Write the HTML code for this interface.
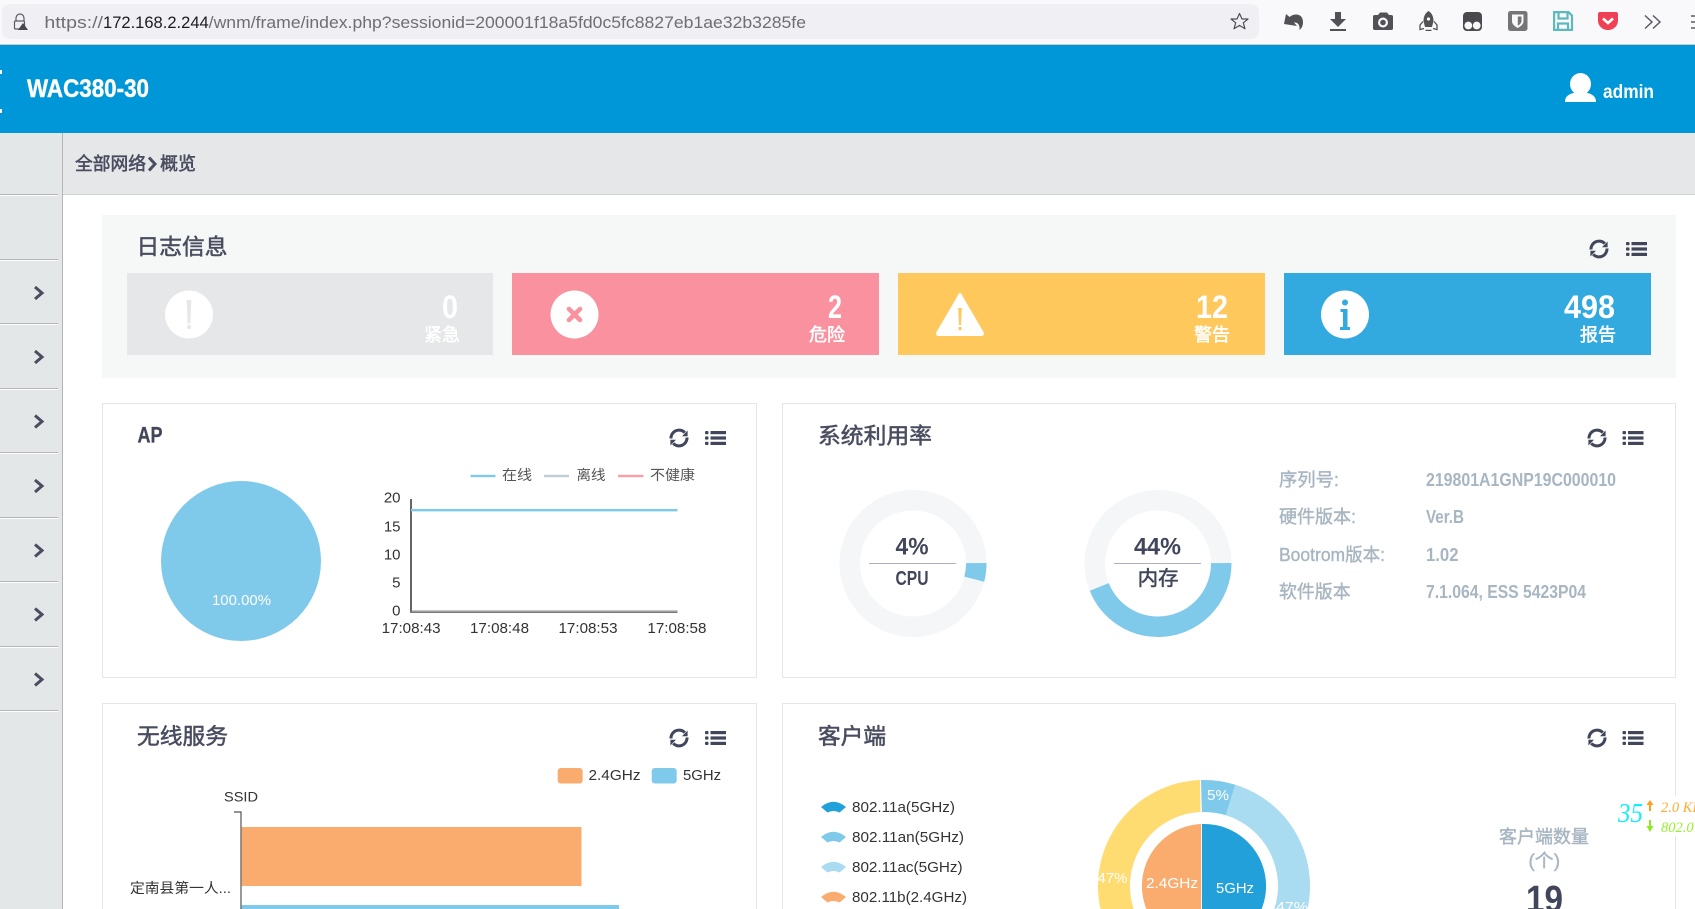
<!DOCTYPE html>
<html lang="zh"><head><meta charset="utf-8"><title>WAC380-30</title>
<style>
html,body{margin:0;padding:0;background:#fff;width:1695px;height:909px;overflow:hidden}
svg{display:block}
text{font-family:"Liberation Sans","Noto Sans CJK SC",sans-serif}
.t{font-size:22px;fill:#4a4d60;stroke:#4a4d60;stroke-width:.55}
.n{font-size:32px;font-weight:bold;fill:#fff}
.l{font-size:18px;fill:#fff;stroke:#fff;stroke-width:.5}
.i{font-size:18px;fill:#a8b6c2;stroke:#a8b6c2;stroke-width:.4}
.v{font-size:18px;font-weight:bold;fill:#a8b6c2}
.c{font-size:15px;fill:#333}
.w{font-size:14.5px;fill:#fff}
.d{font-weight:bold;fill:#41465a}
</style></head><body>
<svg width="1695" height="909" viewBox="0 0 1695 909" xmlns="http://www.w3.org/2000/svg">
<defs>
<g id="ref" fill="none" stroke="#41465a">
<path d="M-8,0.5A8,8 0 0 1 5.8,-5.4" stroke-width="3"/>
<path d="M8,-0.5A8,8 0 0 1 -5.8,5.4" stroke-width="3"/>
<path d="M8.6,-7.5V-1.8H3Z M-8.6,7.5V1.8H-3Z" fill="#41465a" stroke="none"/>
</g>
<g id="men" fill="#41465a">
<rect x="0" y="0" width="3.5" height="3.2" rx="1"/><rect x="5.5" y="0" width="15.5" height="3.2"/>
<rect x="0" y="5.4" width="3.5" height="3.2" rx="1"/><rect x="5.5" y="5.4" width="15.5" height="3.2"/>
<rect x="0" y="10.8" width="3.5" height="3.2" rx="1"/><rect x="5.5" y="10.8" width="15.5" height="3.2"/>
</g>
<path id="leg" d="M-12.5,0Q0,-10.5 12.5,0L6,5.5Q0,2.5 -6,5.5Z"/>
<path id="chev" d="M-4,-6L3,0L-4,6" fill="none" stroke="#4a4d60" stroke-width="3"/>
</defs>

<!-- browser bar -->
<rect width="1695" height="44" fill="#f9f9fb"/>
<rect y="44" width="1695" height="1" fill="#ccc"/>
<rect x="2" y="4" width="1257" height="35" rx="8" fill="#f0f0f4"/>
<g fill="none" stroke="#5b5b66" stroke-width="1.2"><path d="M16,21V18A4,4 0 0 1 24,18V21"/><rect x="14.5" y="21" width="10" height="8" rx="1"/></g>
<path d="M23,23L28,30H18Z" fill="#45454d"/>
<text x="44.4" y="28" font-size="17" fill="#6e6e73" textLength="58.6" lengthAdjust="spacingAndGlyphs">https://</text>
<text x="103" y="28" font-size="17" fill="#1c1c20" textLength="105.7" lengthAdjust="spacingAndGlyphs">172.168.2.244</text>
<text x="208.7" y="28" font-size="17" fill="#6e6e73" textLength="597.3" lengthAdjust="spacingAndGlyphs">/wnm/frame/index.php?sessionid=200001f18a5fd0c5fc8827eb1ae32b3285fe</text>
<path d="M1239.5,13.5L1242,19H1248L1243.3,22.8L1245,28.8L1239.5,25.4L1234,28.8L1235.7,22.8L1231,19H1237Z" fill="none" stroke="#4e4e56" stroke-width="1.2" stroke-linejoin="round"/>
<!-- undo -->
<path d="M1284,24L1286,14L1289.5,17C1295,12.5 1303,14 1303,22C1303,25.5 1302,28 1299.5,30C1300,26 1298.5,22 1294,22.5L1297,26Z" fill="#525256"/>
<!-- download -->
<path d="M1335,12H1341V19H1346L1338,27L1330,19H1335Z" fill="#525256"/><rect x="1330" y="29" width="16" height="2" fill="#525256"/>
<!-- camera -->
<path d="M1373,16.5Q1373,15 1375,15H1378L1380,12.5H1387L1389,15H1391Q1393,15 1393,16.5V28.5Q1393,30 1391,30H1375Q1373,30 1373,28.5Z" fill="#525256"/><circle cx="1383" cy="22.5" r="5" fill="#f9f9fb"/><circle cx="1383" cy="22.5" r="2.8" fill="#525256"/>
<!-- rocket -->
<path d="M1428.5,11C1432,13 1433.5,17 1433.5,21L1432,27H1425L1423.5,21C1423.5,17 1425,13 1428.5,11Z" fill="#525256"/>
<circle cx="1428.5" cy="19" r="1.6" fill="#f9f9fb"/>
<path d="M1423,21.5L1420,25V29.5L1424,28.5M1434,21.5L1437,25V29.5L1433,28.5M1425.5,30.4H1431.5" fill="none" stroke="#525256" stroke-width="1.3"/>
<!-- tampermonkey -->
<rect x="1463" y="12" width="19" height="19" rx="4" fill="#4a4a4e"/><circle cx="1468.3" cy="25.5" r="3.9" fill="#f9f9fb"/><circle cx="1476.7" cy="25.5" r="3.9" fill="#f9f9fb"/>
<!-- bitwarden -->
<rect x="1508" y="11" width="19.5" height="20" rx="2.5" fill="#757575"/>
<path d="M1512,14.5H1523.5V21C1523.5,24.5 1520.5,26.5 1517.7,28C1515,26.5 1512,24.5 1512,21Z" fill="#f9f9fb"/>
<path d="M1517.8,16.5H1521.5V21C1521.5,23 1519.8,24.6 1517.8,25.7Z" fill="#757575"/>
<!-- save -->
<g fill="none" stroke="#5eb8bd" stroke-width="2.2"><path d="M1554.1,12.1H1568.5L1572,15.6V29.9H1554.1Z"/><path d="M1558.5,12.5V18.5H1567.5V12.5M1558,30V23.5H1568V30"/></g>
<!-- pocket -->
<path d="M1598,14Q1598,12 1600,12H1616Q1618,12 1618,14V20.5C1618,26 1613.5,30 1608,30C1602.5,30 1598,26 1598,20.5Z" fill="#ef4056"/>
<path d="M1603,18.5L1608,23L1613,18.5" fill="none" stroke="#fff" stroke-width="2.6"/>
<!-- chevrons / menu -->
<path d="M1645,15.5L1652,22L1645,28.5M1653,15.5L1660,22L1653,28.5" fill="none" stroke="#5b5b66" stroke-width="1.5"/>
<path d="M1691,16H1695M1691,22H1695M1691,28H1695" stroke="#5b5b66" stroke-width="1.5"/>

<!-- header -->
<rect y="45" width="1695" height="88" fill="#0097d8"/>
<rect x="0" y="70" width="2" height="4" fill="#fff"/><rect x="0" y="109" width="2" height="4" fill="#fff"/>
<text x="27" y="97" font-size="25" font-weight="bold" fill="#fff" stroke="#fff" stroke-width=".4" textLength="122" lengthAdjust="spacingAndGlyphs">WAC380-30</text>
<ellipse cx="1580.5" cy="84" rx="10.5" ry="11" fill="#fff"/>
<path d="M1565,102C1565,96 1569,94 1575,92.5Q1580.5,96 1586,92.5C1592,94 1596,96 1596,102Z" fill="#fff"/>
<text x="1603" y="98" font-size="19" font-weight="bold" fill="#fff" textLength="51" lengthAdjust="spacingAndGlyphs">admin</text>

<!-- sidebar -->
<rect y="133" width="62" height="776" fill="#e4e7e8"/>
<rect x="62" y="133" width="1" height="776" fill="#b5b5b5"/>
<g fill="#b5b5b5">
<rect y="194" width="58" height="1"/><rect y="259" width="58" height="1"/><rect y="323" width="58" height="1"/><rect y="388" width="58" height="1"/><rect y="452" width="58" height="1"/><rect y="517" width="58" height="1"/><rect y="581" width="58" height="1"/><rect y="646" width="58" height="1"/><rect y="710" width="58" height="1"/>
</g>
<g fill="#fff">
<rect y="195" width="58" height="1"/><rect y="260" width="58" height="1"/><rect y="324" width="58" height="1"/><rect y="389" width="58" height="1"/><rect y="453" width="58" height="1"/><rect y="518" width="58" height="1"/><rect y="582" width="58" height="1"/><rect y="647" width="58" height="1"/><rect y="711" width="58" height="1"/>
</g>
<use href="#chev" x="39" y="293"/><use href="#chev" x="39" y="357"/><use href="#chev" x="39" y="421.5"/><use href="#chev" x="39" y="486"/><use href="#chev" x="39" y="550.5"/><use href="#chev" x="39" y="614.5"/><use href="#chev" x="39" y="679.5"/>

<!-- breadcrumb -->
<rect x="63" y="133" width="1632" height="61" fill="#e6e7e9"/>
<rect x="63" y="194" width="1632" height="1" fill="#cfd0d2"/>
<text x="75" y="170" font-size="18" fill="#4a4d60" stroke="#4a4d60" stroke-width=".55" textLength="71" lengthAdjust="spacingAndGlyphs">全部网络</text>
<path d="M149,157.5L155,164L149,170.5" fill="none" stroke="#4a4d60" stroke-width="3"/>
<text x="160" y="170" font-size="18" fill="#4a4d60" stroke="#4a4d60" stroke-width=".55" textLength="36" lengthAdjust="spacingAndGlyphs">概览</text>

<!-- log panel -->
<rect x="102" y="215" width="1574" height="163" fill="#f6f8f7"/>
<text class="t" x="136.5" y="254.5" textLength="91" lengthAdjust="spacingAndGlyphs">日志信息</text>
<use href="#ref" x="1599" y="249"/><use href="#men" x="1626" y="242"/>
<rect x="127" y="273" width="366" height="82" fill="#e6e7e9"/>
<rect x="512" y="273" width="367" height="82" fill="#fa919f"/>
<rect x="898" y="273" width="367" height="82" fill="#ffc85c"/>
<rect x="1284" y="273" width="367" height="82" fill="#33aadf"/>
<circle cx="189" cy="314.5" r="24" fill="#fff"/>
<path d="M186.6,300H191.4L190.3,323.5H187.7Z" fill="#e6e7e9"/><rect x="187" y="325" width="4" height="4" rx="1.6" fill="#e6e7e9"/>
<circle cx="574.5" cy="314.5" r="24" fill="#fff"/>
<path d="M569,309L580,320M580,309L569,320" stroke="#fa919f" stroke-width="4.6" fill="none" stroke-linecap="round"/>
<path d="M960,293Q961.5,293 962.5,296L983.5,332Q985,336 981,336H939Q935,336 936.5,332L957.5,296Q958.5,293 960,293Z" fill="#fff"/>
<path d="M958.2,308H961.8L961,325H959Z" fill="#ffc85c"/><rect x="958.5" y="327" width="3" height="3.2" fill="#ffc85c"/>
<circle cx="1345" cy="314.5" r="24" fill="#fff"/>
<circle cx="1345" cy="302.5" r="3" fill="#33aadf"/>
<path d="M1340.5,309H1347.5V327H1350V330H1340V327H1343V312H1340.5Z" fill="#33aadf"/>
<text class="n" x="442" y="318" textLength="16" lengthAdjust="spacingAndGlyphs">0</text>
<text class="n" x="828" y="318" textLength="14" lengthAdjust="spacingAndGlyphs">2</text>
<text class="n" x="1196" y="318" textLength="32" lengthAdjust="spacingAndGlyphs">12</text>
<text class="n" x="1564" y="318" textLength="51" lengthAdjust="spacingAndGlyphs">498</text>
<text class="l" x="424" y="341" textLength="36" lengthAdjust="spacingAndGlyphs">紧急</text>
<text class="l" x="809" y="341" textLength="36" lengthAdjust="spacingAndGlyphs">危险</text>
<text class="l" x="1194" y="341" textLength="36" lengthAdjust="spacingAndGlyphs">警告</text>
<text class="l" x="1580" y="341" textLength="36" lengthAdjust="spacingAndGlyphs">报告</text>

<!-- AP panel -->
<rect x="102.5" y="403.5" width="654" height="274" fill="#fff" stroke="#e6e6e6"/>
<text x="137.5" y="442.5" font-size="22" font-weight="bold" fill="#41465a" stroke="#41465a" stroke-width=".3" textLength="25" lengthAdjust="spacingAndGlyphs">AP</text>
<use href="#ref" x="679" y="438"/><use href="#men" x="705" y="431"/>
<circle cx="241" cy="561" r="80" fill="#7fcaeb"/>
<text class="w" x="212" y="605" textLength="59" lengthAdjust="spacingAndGlyphs">100.00%</text>
<rect x="470.5" y="474.8" width="25" height="2.4" fill="#7fcaeb"/>
<text x="502" y="480" font-size="14" fill="#555" textLength="30" lengthAdjust="spacingAndGlyphs">在线</text>
<rect x="544" y="474.8" width="25" height="2.4" fill="#c0cdd7"/>
<text x="576.5" y="480" font-size="14" fill="#555" textLength="29" lengthAdjust="spacingAndGlyphs">离线</text>
<rect x="618" y="474.8" width="25.5" height="2.4" fill="#fa9fa9"/>
<text x="650" y="480" font-size="14" fill="#555" textLength="45" lengthAdjust="spacingAndGlyphs">不健康</text>
<g text-anchor="end" font-size="15" fill="#333">
<text x="400.5" y="502.5">20</text><text x="400.5" y="531.5">15</text><text x="400.5" y="559.5">10</text><text x="400.5" y="587.5">5</text><text x="400.5" y="615.5">0</text>
</g>
<rect x="410" y="499" width="2" height="114" fill="#666"/>
<rect x="410" y="610.5" width="267.5" height="2.5" fill="#777"/>
<rect x="412" y="610" width="265.5" height="1.5" fill="#c8c4c8"/>
<rect x="411" y="509" width="266.5" height="2.4" fill="#7fcaeb"/>
<text class="c" x="381.6" y="633" textLength="59" lengthAdjust="spacingAndGlyphs">17:08:43</text>
<text class="c" x="470" y="633" textLength="59" lengthAdjust="spacingAndGlyphs">17:08:48</text>
<text class="c" x="558.5" y="633" textLength="59" lengthAdjust="spacingAndGlyphs">17:08:53</text>
<text class="c" x="647.4" y="633" textLength="59" lengthAdjust="spacingAndGlyphs">17:08:58</text>

<!-- system panel -->
<rect x="782.5" y="403.5" width="893" height="274" fill="#fff" stroke="#e6e6e6"/>
<text class="t" x="818" y="443.5" textLength="114" lengthAdjust="spacingAndGlyphs">系统利用率</text>
<use href="#ref" x="1597" y="438"/><use href="#men" x="1622.5" y="431"/>
<circle cx="913" cy="563.5" r="63.25" fill="none" stroke="#f4f6f8" stroke-width="20.5"/>
<circle cx="913" cy="563.5" r="63.25" fill="none" stroke="#7fcaeb" stroke-width="20.5" pathLength="100" stroke-dasharray="4 96"/>
<circle cx="1158" cy="563.5" r="63.25" fill="none" stroke="#f4f6f8" stroke-width="20.5"/>
<circle cx="1158" cy="563.5" r="63.25" fill="none" stroke="#7fcaeb" stroke-width="20.5" pathLength="100" stroke-dasharray="44 56"/>
<text class="d" x="895.5" y="554.3" font-size="24" textLength="33" lengthAdjust="spacingAndGlyphs">4%</text>
<rect x="869" y="563" width="87" height="1" fill="#b0afc0"/>
<text class="d" x="895.5" y="585" font-size="20" textLength="33" lengthAdjust="spacingAndGlyphs">CPU</text>
<text class="d" x="1134" y="554.3" font-size="24" textLength="47" lengthAdjust="spacingAndGlyphs">44%</text>
<rect x="1114" y="563" width="87" height="1" fill="#b0afc0"/>
<text x="1137.6" y="585" font-size="20" fill="#41465a" stroke="#41465a" stroke-width=".5" textLength="41" lengthAdjust="spacingAndGlyphs">内存</text>
<text class="i" x="1279" y="486" textLength="60" lengthAdjust="spacingAndGlyphs">序列号:</text>
<text class="i" x="1279" y="523" textLength="77" lengthAdjust="spacingAndGlyphs">硬件版本:</text>
<text class="i" x="1279" y="561" textLength="106" lengthAdjust="spacingAndGlyphs">Bootrom版本:</text>
<text class="i" x="1279" y="598" textLength="71.6" lengthAdjust="spacingAndGlyphs">软件版本</text>
<text class="v" x="1426" y="486" textLength="190" lengthAdjust="spacingAndGlyphs">219801A1GNP19C000010</text>
<text class="v" x="1426" y="523" textLength="38" lengthAdjust="spacingAndGlyphs">Ver.B</text>
<text class="v" x="1426" y="561" textLength="32.5" lengthAdjust="spacingAndGlyphs">1.02</text>
<text class="v" x="1426" y="598" textLength="160" lengthAdjust="spacingAndGlyphs">7.1.064, ESS 5423P04</text>

<!-- wireless panel -->
<path d="M102.5,909V703.5H756.5V909" fill="#fff" stroke="#e6e6e6"/>
<text class="t" x="137" y="744" textLength="91" lengthAdjust="spacingAndGlyphs">无线服务</text>
<use href="#ref" x="679" y="738"/><use href="#men" x="705" y="731"/>
<rect x="557.7" y="768" width="25" height="15.5" rx="3" fill="#faac6e"/>
<text class="c" x="588.5" y="780" textLength="52" lengthAdjust="spacingAndGlyphs">2.4GHz</text>
<rect x="651.7" y="768" width="25" height="15.5" rx="3" fill="#7fcaeb"/>
<text class="c" x="683" y="780" textLength="38" lengthAdjust="spacingAndGlyphs">5GHz</text>
<text x="224" y="801.5" font-size="14" fill="#333" textLength="34" lengthAdjust="spacingAndGlyphs">SSID</text>
<path d="M234,812H241V909" fill="none" stroke="#555" stroke-width="1.2"/>
<rect x="241.5" y="827" width="340" height="59" fill="#faac6e"/>
<rect x="241.5" y="905" width="377.5" height="4" fill="#7fcaeb"/>
<text x="130" y="893" font-size="14" fill="#333" textLength="101" lengthAdjust="spacingAndGlyphs">定南县第一人...</text>

<!-- client panel -->
<path d="M782.5,909V703.5H1675.5V909" fill="#fff" stroke="#e6e6e6"/>
<text class="t" x="818" y="744" textLength="68" lengthAdjust="spacingAndGlyphs">客户端</text>
<use href="#ref" x="1597" y="738"/><use href="#men" x="1622.5" y="731"/>
<use href="#leg" x="833.5" y="807" fill="#22a0d9"/>
<use href="#leg" x="833.5" y="837" fill="#7fcaeb"/>
<use href="#leg" x="833.5" y="867" fill="#a9dbf1"/>
<use href="#leg" x="833.5" y="897" fill="#faac6e"/>
<text class="c" x="852" y="812" textLength="103" lengthAdjust="spacingAndGlyphs">802.11a(5GHz)</text>
<text class="c" x="852" y="842" textLength="112" lengthAdjust="spacingAndGlyphs">802.11an(5GHz)</text>
<text class="c" x="852" y="872" textLength="110.6" lengthAdjust="spacingAndGlyphs">802.11ac(5GHz)</text>
<text class="c" x="852" y="902" textLength="115" lengthAdjust="spacingAndGlyphs">802.11b(2.4GHz)</text>
<path d="M1201,780A106,106 0 0 1 1235.3,784.7L1225.9,815.3A74,74 0 0 0 1201.9,812Z" fill="#7fcaeb"/>
<path d="M1235.3,784.7A106,106 0 0 1 1307.5,909H1274.3A74,74 0 0 0 1225.9,815.3Z" fill="#a9dbf1"/>
<path d="M1100.5,909A106,106 0 0 1 1200,780L1200.5,812A74,74 0 0 0 1133.7,909Z" fill="#ffdc72"/>
<path d="M1202,824A62,62 0 0 1 1261.6,909H1202Z" fill="#22a0d9"/>
<path d="M1201.2,824A62,62 0 0 0 1146.4,909H1201.2Z" fill="#faac6e"/>
<text class="w" x="1207" y="800" textLength="22" lengthAdjust="spacingAndGlyphs">5%</text>
<text class="w" x="1097.5" y="883" textLength="30" lengthAdjust="spacingAndGlyphs">47%</text>
<text class="w" x="1276" y="912" textLength="32" lengthAdjust="spacingAndGlyphs">47%</text>
<text class="w" x="1146" y="888" textLength="52" lengthAdjust="spacingAndGlyphs">2.4GHz</text>
<text class="w" x="1216" y="893" textLength="38" lengthAdjust="spacingAndGlyphs">5GHz</text>
<text class="i" x="1499" y="843" textLength="90" lengthAdjust="spacingAndGlyphs">客户端数量</text>
<text class="i" x="1528.5" y="867" textLength="31.5" lengthAdjust="spacingAndGlyphs">(个)</text>
<text class="d" x="1526" y="912" font-size="38" textLength="37" lengthAdjust="spacingAndGlyphs">19</text>

<!-- floating net-speed widget -->
<rect x="1617" y="796" width="78" height="40" fill="#fff"/>
<text x="1618" y="822" font-size="27" font-style="italic" fill="#10eeff" style="font-family:'Liberation Serif',serif" textLength="25" lengthAdjust="spacingAndGlyphs">35</text>
<path d="M1650,800L1653.5,805H1651V811H1649V805H1646.5Z" fill="#ff9f1a"/>
<path d="M1650,832L1653.5,826H1651V820H1649V826H1646.5Z" fill="#8fe81f"/>
<text x="1661" y="812" font-size="14.5" font-style="italic" fill="#ffaa33" style="font-family:'Liberation Serif',serif">2.0 KB/s</text>
<text x="1661" y="832" font-size="14.5" font-style="italic" fill="#99ee33" style="font-family:'Liberation Serif',serif">802.0</text>
</svg>
</body></html>
